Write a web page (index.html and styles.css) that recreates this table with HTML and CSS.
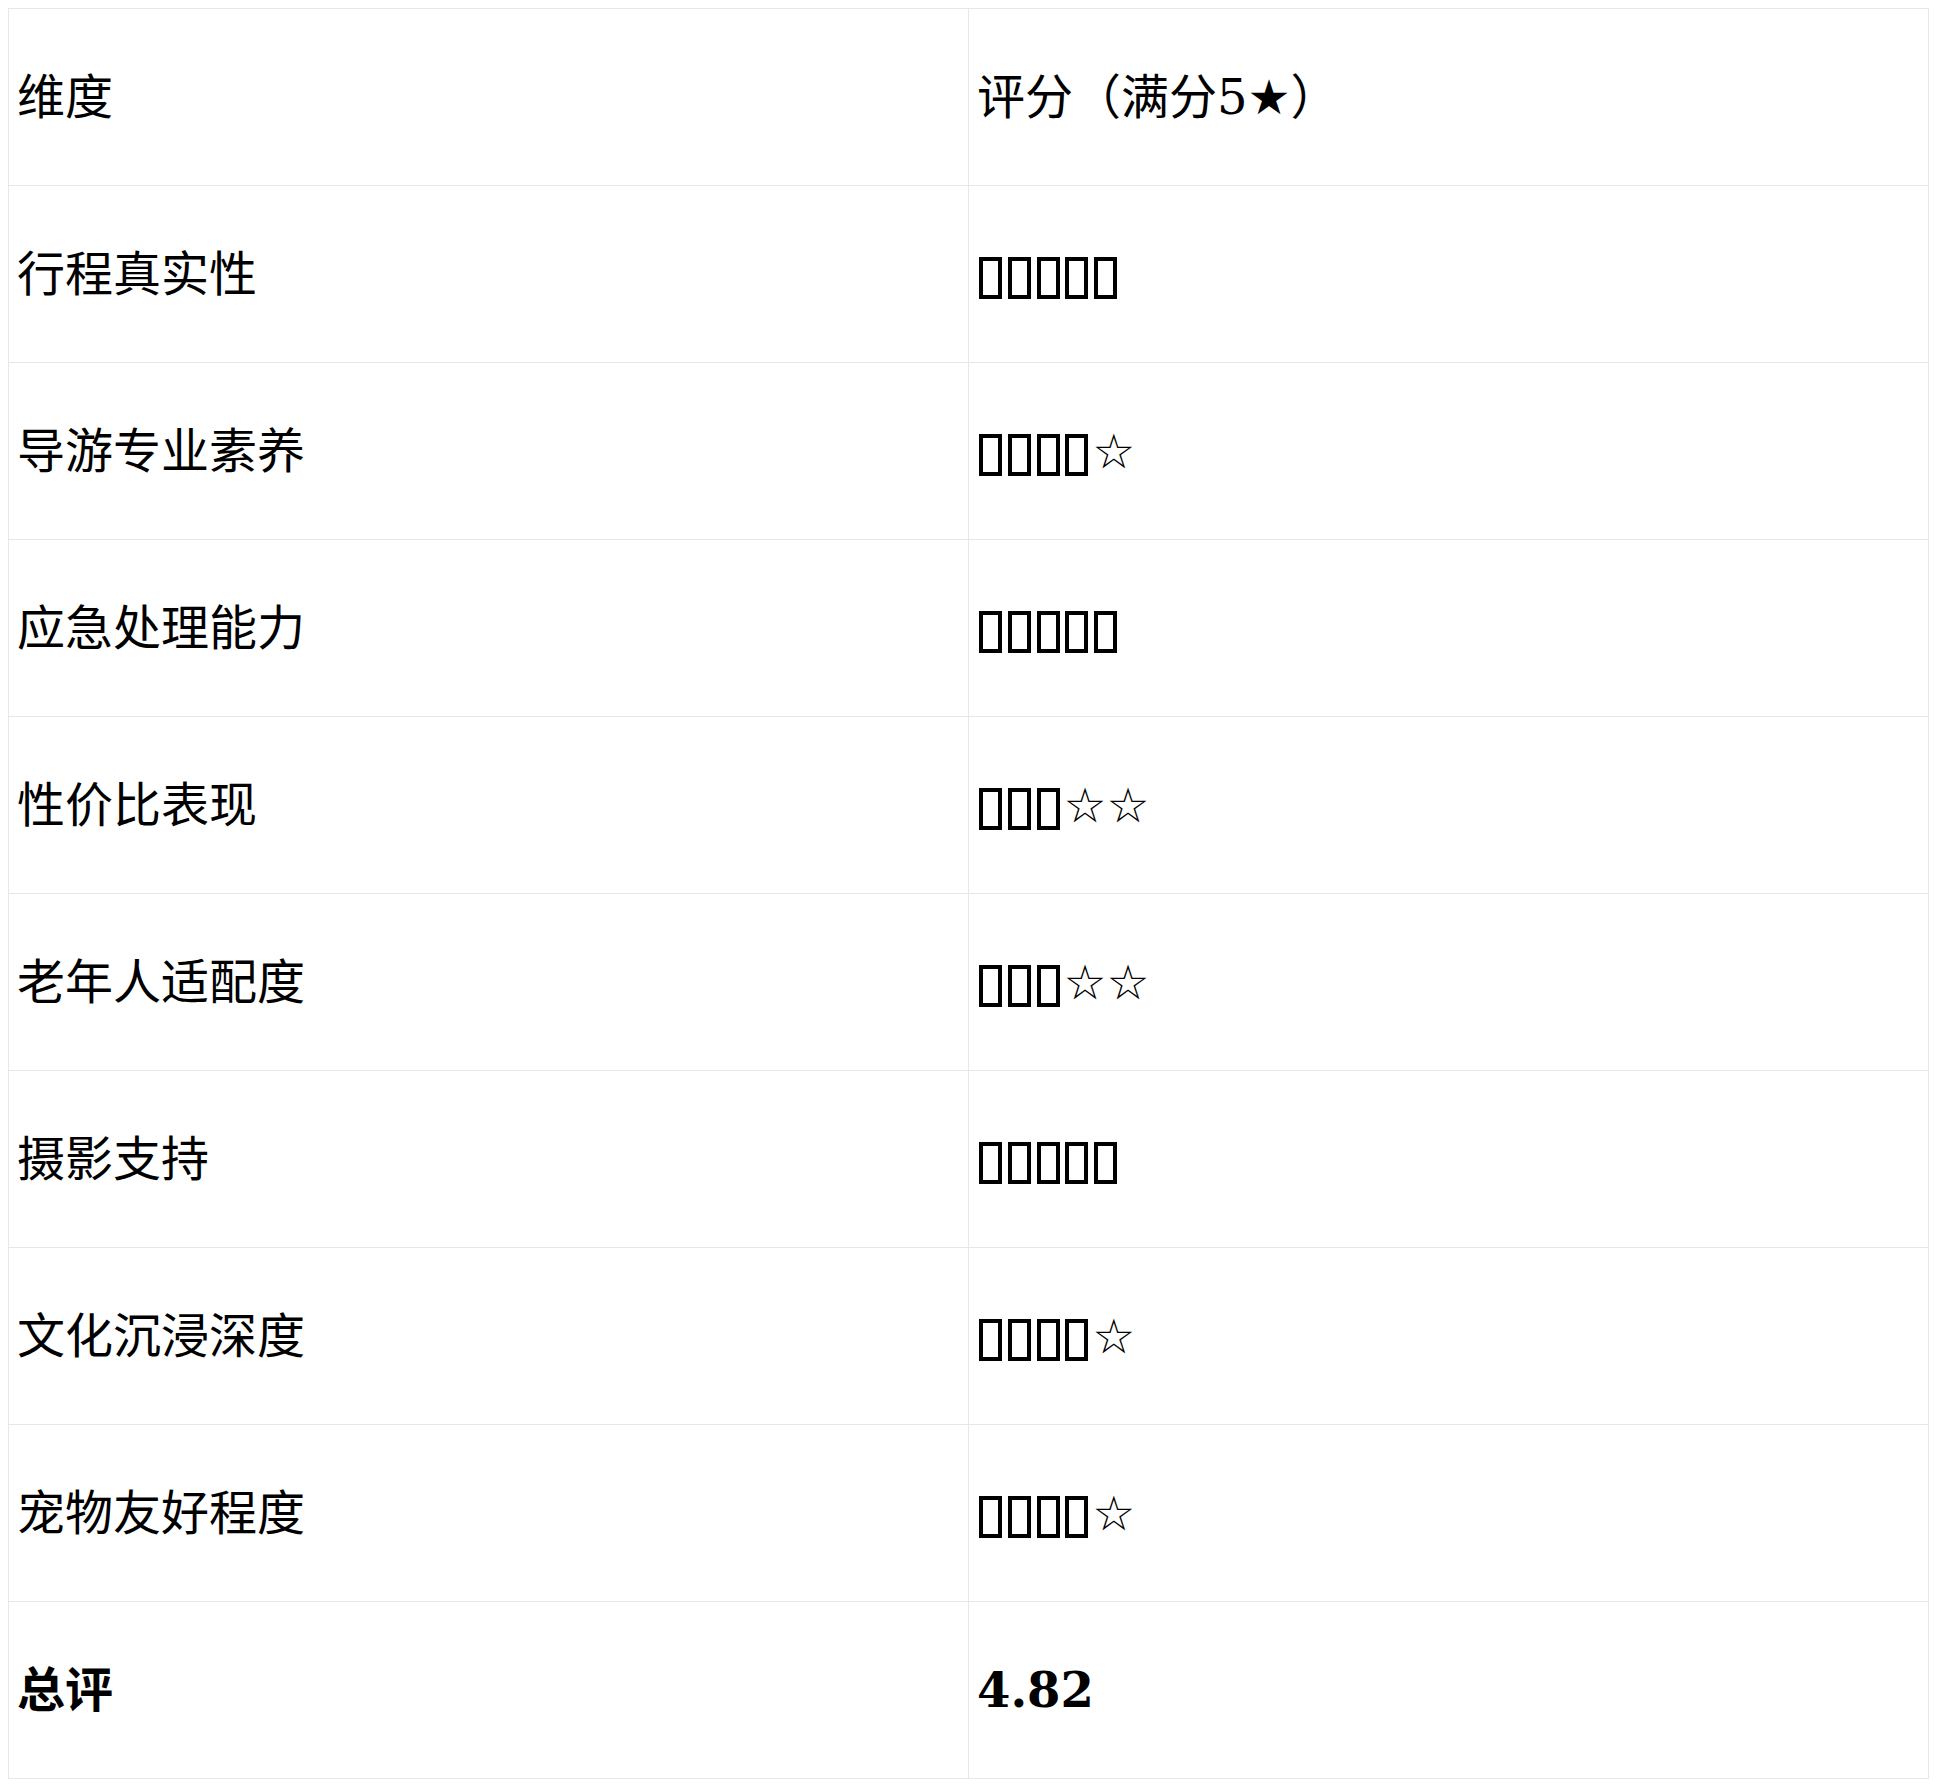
FILE: index.html
```html
<!DOCTYPE html>
<html lang="zh">
<head>
<meta charset="utf-8">
<title>评分</title>
<link rel="stylesheet" href="styles.css">
</head>
<body>
<table class="rating">
  <colgroup><col class="col-dim"><col class="col-score"></colgroup>
  <tr><td>维度</td><td>评分（满分5★）</td></tr>
  <tr><td>行程真实性</td><td><span class="tofu">⭐</span><span class="tofu">⭐</span><span class="tofu">⭐</span><span class="tofu">⭐</span><span class="tofu">⭐</span></td></tr>
  <tr><td>导游专业素养</td><td><span class="tofu">⭐</span><span class="tofu">⭐</span><span class="tofu">⭐</span><span class="tofu">⭐</span>☆</td></tr>
  <tr><td>应急处理能力</td><td><span class="tofu">⭐</span><span class="tofu">⭐</span><span class="tofu">⭐</span><span class="tofu">⭐</span><span class="tofu">⭐</span></td></tr>
  <tr><td>性价比表现</td><td><span class="tofu">⭐</span><span class="tofu">⭐</span><span class="tofu">⭐</span>☆☆</td></tr>
  <tr><td>老年人适配度</td><td><span class="tofu">⭐</span><span class="tofu">⭐</span><span class="tofu">⭐</span>☆☆</td></tr>
  <tr><td>摄影支持</td><td><span class="tofu">⭐</span><span class="tofu">⭐</span><span class="tofu">⭐</span><span class="tofu">⭐</span><span class="tofu">⭐</span></td></tr>
  <tr><td>文化沉浸深度</td><td><span class="tofu">⭐</span><span class="tofu">⭐</span><span class="tofu">⭐</span><span class="tofu">⭐</span>☆</td></tr>
  <tr><td>宠物友好程度</td><td><span class="tofu">⭐</span><span class="tofu">⭐</span><span class="tofu">⭐</span><span class="tofu">⭐</span>☆</td></tr>
  <tr class="total"><td><strong>总评</strong></td><td><strong>4.82</strong></td></tr>
</table>
</body>
</html>
```
FILE: styles.css
```css
body {
  margin: 8px;
  background: #ffffff;
  color: #000000;
  font-family: "DejaVu Serif", "DejaVu Sans", "Noto Sans CJK SC", serif;
  font-size: 48px;
}
.rating {
  width: 1921px;
  border-collapse: collapse;
  table-layout: fixed;
}
.col-dim,
.col-score {
  width: 50%;
}
.rating td {
  border: 1px solid #e6e6ee;
  padding: 52px 8px;
  line-height: 72px;
  text-align: left;
  vertical-align: middle;
}
.rating strong {
  font-weight: bold;
}
.tofu {
  display: inline-block;
  box-sizing: border-box;
  width: 23px;
  height: 42px;
  margin: 0 3.8px 0 2px;
  border: 4px solid #000000;
  overflow: hidden;
  font-size: 10px;
  line-height: 34px;
  text-align: center;
  color: transparent;
  vertical-align: -8px;
}
```
